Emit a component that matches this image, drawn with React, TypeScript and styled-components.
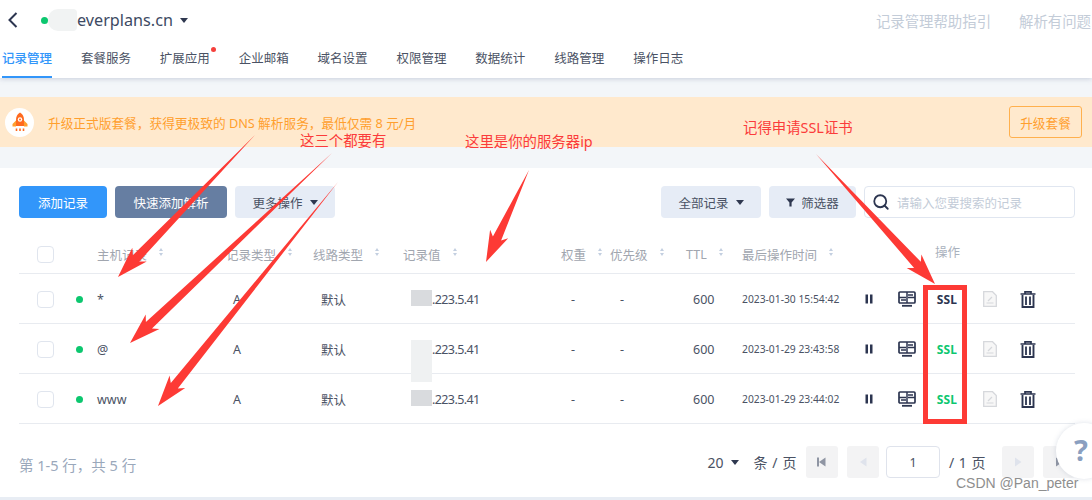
import React from "react";
import styled, { createGlobalStyle } from "styled-components";
import { Search } from "lucide-react";

const FONT = `"Noto Sans", "Noto Sans CJK SC", sans-serif`;

const GlobalStyle = createGlobalStyle`
    html, body {
        margin: 0;
        padding: 0;
        background: #f3f6f9;
    }
    * {
        box-sizing: border-box;
    }
`;

const Page = styled.div`
    position: relative;
    width: 1092px;
    height: 500px;
    overflow: hidden;
    font-family: ${FONT};
    font-size: 12.5px;
    color: #4a5264;
    background: #f3f6f9;
`;

const Header = styled.header`
    height: 78px;
    background: #fff;
    box-shadow: 0 1px 5px rgba(120, 135, 165, 0.35);
`;

const TitleRow = styled.div`
    height: 40px;
    display: flex;
    align-items: center;
    padding-left: 8px;
`;

const Domain = styled.div`
    display: flex;
    align-items: center;
    margin-left: 23px;
    font-size: 16.2px;
    color: #3d4a63;
`;

const StatusDot = styled.span<{ $left?: number }>`
    flex: none;
    width: 7px;
    height: 7px;
    border-radius: 50%;
    background: #0cc76f;
    margin-left: ${(p) => p.$left ?? 0}px;
`;

const DomainMask = styled.span`
    width: 29px;
    height: 22px;
    background: #f1f3f3;
    border-radius: 10px 4px 4px 10px;
`;

const Caret = styled.span<{ $left?: number; $color?: string }>`
    flex: none;
    display: inline-block;
    width: 0;
    height: 0;
    margin-left: ${(p) => p.$left ?? 0}px;
    border-left: 4px solid transparent;
    border-right: 4px solid transparent;
    border-top: 5px solid ${(p) => p.$color ?? "#2f3850"};
`;

const HelpLinks = styled.div`
    margin-left: auto;
    margin-right: 1px;
    display: flex;
    gap: 28px;
    font-size: 14.4px;
    color: #c3ccd8;
    white-space: nowrap;
`;

const Tabs = styled.nav`
    height: 38px;
    display: flex;
    gap: 28.9px;
    padding-left: 2px;
`;

const Tab = styled.div<{ $active?: boolean }>`
    position: relative;
    height: 38px;
    width: 50px;
    padding-top: 9px;
    line-height: 20px;
    font-size: 12.5px;
    white-space: nowrap;
    color: ${(p) => (p.$active ? "#3296fa" : "#4a5264")};
    font-weight: ${(p) => (p.$active ? 500 : 400)};
    border-bottom: 2px solid ${(p) => (p.$active ? "#3296fa" : "transparent")};
`;

const RedDot = styled.span`
    position: absolute;
    top: 7px;
    right: -6px;
    width: 5px;
    height: 5px;
    border-radius: 50%;
    background: #f5403c;
`;

const Banner = styled.div`
    height: 50px;
    margin-top: 19px;
    display: flex;
    align-items: center;
    padding: 0 10px 0 5px;
    background: #ffe9cd;
    color: #ff9f2e;
    font-size: 12.7px;
`;

const RocketBadge = styled.div`
    width: 29px;
    height: 29px;
    border-radius: 50%;
    background: #fff;
    display: flex;
    align-items: center;
    justify-content: center;
    margin-right: 14px;
`;

const UpgradeButton = styled.div`
    margin-left: auto;
    width: 73px;
    height: 32px;
    display: flex;
    align-items: center;
    justify-content: center;
    border: 1px solid #ffb04d;
    border-radius: 3px;
`;

const Card = styled.main`
    height: 329px;
    margin-top: 21px;
    padding: 18px 17px 0 19px;
    background: #fff;
`;

const Toolbar = styled.div`
    display: flex;
    gap: 8px;
    height: 32px;
`;

const Button = styled.div<{ $variant?: "primary" | "slate"; $width: number }>`
    width: ${(p) => p.$width}px;
    height: 32px;
    display: flex;
    align-items: center;
    justify-content: center;
    border-radius: 4px;
    white-space: nowrap;
    background: ${(p) =>
        p.$variant === "primary" ? "#3296fa" : p.$variant === "slate" ? "#667ea2" : "#e6ecf6"};
    color: ${(p) => (p.$variant ? "#fff" : "#4a5264")};
`;

const Spacer = styled.div`
    flex: 1;
`;

const SearchBox = styled.div`
    width: 211px;
    height: 32px;
    display: flex;
    align-items: center;
    gap: 7px;
    padding-left: 7px;
    border: 1px solid #e0e6f0;
    border-radius: 4px;
    color: #c3ccd8;
`;

const columns = "48px 30px 129px 87px 90px 158px 49px 76px 56px 122px 211px";

const TableHead = styled.div`
    display: grid;
    grid-template-columns: ${columns};
    height: 56px;
    padding-top: 17px;
    align-items: center;
    border-bottom: 1px solid #e8ebf0;
    color: #a1a6af;
`;

const TableRow = styled.div`
    display: grid;
    grid-template-columns: ${columns};
    height: 50px;
    padding-top: 1px;
    align-items: center;
    border-bottom: 1px solid #e8ebf0;
`;

const Cell = styled.div<{ $pad?: number }>`
    display: flex;
    align-items: center;
    padding-left: ${(p) => p.$pad ?? 0}px;
    white-space: nowrap;
`;

const OperateCell = styled(Cell)`
    margin-bottom: 5px;
    padding-left: 71px;
    color: #a9b1bd;
`;

const TimeCell = styled(Cell)`
    font-size: 10.3px;
`;

const ValueCell = styled(Cell)`
    letter-spacing: -0.6px;
`;

const Check = styled.span`
    width: 17px;
    height: 17px;
    margin-left: 18px;
    border: 1px solid #e0e5ee;
    border-radius: 4px;
    background: #fff;
`;

const RowDot = styled(StatusDot)`
    margin-left: 9px;
`;

const SortBox = styled.span`
    display: inline-flex;
    flex-direction: column;
    gap: 2px;
    margin-left: 12px;
    margin-bottom: 5px;
`;

const SortUp = styled.i`
    display: block;
    width: 0;
    height: 0;
    border-left: 2.5px solid transparent;
    border-right: 2.5px solid transparent;
    border-bottom: 3px solid #c3cfe0;
`;

const SortDown = styled(SortUp)`
    border-bottom: 0;
    border-top: 3px solid #c3cfe0;
`;

const Mask = styled.span<{ $tone: string; $height: number }>`
    position: relative;
    width: 21px;
    height: 14px;
    &::before {
        content: "";
        position: absolute;
        top: -2px;
        left: 0;
        width: 21px;
        height: ${(p) => p.$height}px;
        background: ${(p) => p.$tone};
    }
`;

const Actions = styled.div`
    display: flex;
    align-items: center;
    padding-left: 1px;
`;

const ActionSlot = styled.span<{ $gap: number; $w: number }>`
    display: flex;
    justify-content: center;
    width: ${(p) => p.$w}px;
    margin-left: ${(p) => p.$gap}px;
`;

const SslLabel = styled.span<{ $on?: boolean }>`
    font-size: 12px;
    font-weight: 700;
    letter-spacing: 0.2px;
    color: ${(p) => (p.$on ? "#0cc76f" : "#2c3550")};
`;

const Pagination = styled.div`
    display: flex;
    align-items: center;
    height: 32px;
    margin-top: 22px;
`;

const TotalText = styled.div`
    margin-top: 5px;
    color: #9aa8bb;
    font-size: 14.5px;
`;

const PageSize = styled.div`
    margin-left: auto;
    display: flex;
    align-items: center;
    font-size: 14px;
    margin-right: 9px;
`;

const PageUnit = styled.span`
    margin-left: 15px;
    letter-spacing: 0.6px;
`;

const PageButton = styled.div<{ $left: number }>`
    width: 32px;
    height: 32px;
    margin-left: ${(p) => p.$left}px;
    display: flex;
    align-items: center;
    justify-content: center;
    border-radius: 3px;
    background: #f3f3f4;
`;

const PageInput = styled.div`
    width: 54px;
    height: 32px;
    margin-left: 7px;
    display: flex;
    align-items: center;
    justify-content: center;
    border: 1px solid #dfe3ec;
    border-radius: 4px;
`;

const PageCount = styled.span`
    margin-left: 9px;
    font-size: 14px;
    letter-spacing: 0.5px;
    white-space: nowrap;
`;

const BottomStrip = styled.div`
    height: 3px;
    background: #e8edf4;
`;

const HelpBubble = styled.div`
    position: absolute;
    left: 1056px;
    top: 423px;
    width: 56px;
    height: 56px;
    padding-left: 18px;
    border-radius: 50%;
    background: #fff;
    box-shadow: 0 0 5px rgba(120, 135, 165, 0.25);
    color: #8a9fc0;
    font-size: 29px;
    font-weight: 700;
    line-height: 54px;
`;

const Watermark = styled.div`
    position: absolute;
    left: 956px;
    top: 474px;
    font-family: "Liberation Sans", sans-serif;
    font-size: 14px;
    line-height: 18px;
    color: #8e8e8e;
    white-space: nowrap;
`;

const Overlay = styled.svg`
    position: absolute;
    left: 0;
    top: 0;
    pointer-events: none;
`;

const Note = styled.div<{ $x: number; $y: number }>`
    position: absolute;
    left: ${(p) => p.$x}px;
    top: ${(p) => p.$y}px;
    font-size: 14.4px;
    line-height: 20px;
    color: #fb3b3b;
    white-space: nowrap;
`;

const RedBox = styled.div`
    position: absolute;
    left: 923px;
    top: 285px;
    width: 44px;
    height: 139px;
    border: 5px solid #fd3a35;
`;

const arrowPoints = (x1: number, y1: number, x2: number, y2: number) => {
    const len = Math.hypot(x2 - x1, y2 - y1);
    const ux = (x2 - x1) / len;
    const uy = (y2 - y1) / len;
    const nx = -uy;
    const ny = ux;
    const at = (back: number, side: number) =>
        `${(x2 - ux * back + nx * side).toFixed(1)},${(y2 - uy * back + ny * side).toFixed(1)}`;
    return [
        `${x1},${y1}`,
        at(26, 4.5),
        at(31, 10),
        `${x2},${y2}`,
        at(31, -10),
        at(26, -4.5),
    ].join(" ");
};

const ARROWS = [
    [255, 135, 118, 277],
    [332, 153, 130, 343],
    [338, 182, 158, 406],
    [529, 170, 486, 262],
    [816, 154, 935, 284],
];

const COLUMNS = ["主机记录", "记录类型", "线路类型", "记录值", "权重", "优先级", "TTL", "最后操作时间"];

const RECORDS = [
    { host: "*", time: "2023-01-30 15:54:42", ssl: false, tone: "#d9dbde", maskH: 16 },
    { host: "@", time: "2023-01-29 23:43:58", ssl: true, tone: "#eff1f2", maskH: 42 },
    { host: "www", time: "2023-01-29 23:44:02", ssl: true, tone: "#d9dbde", maskH: 16 },
];

const ChevronBack = () => (
    <svg width="10" height="16" viewBox="0 0 10 16">
        <path d="M8.5 1 L1.5 8 L8.5 15" fill="none" stroke="#2c3550" strokeWidth="2" />
    </svg>
);

const Rocket = () => (
    <svg width="16" height="20" viewBox="0 0 16 20">
        <path d="M8 0.5 C11 2 12 5 12 8 V14 H4 V8 C4 5 5 2 8 0.5 Z" fill="#ff6a1f" />
        <circle cx="8" cy="7.5" r="2.2" fill="#fff" />
        <circle cx="8" cy="7.5" r="1" fill="#ff6a1f" />
        <path d="M4 8.5 L0.5 12 V14.5 H4 Z M12 8.5 L15.5 12 V14.5 H12 Z" fill="#ff9f2e" />
        <path d="M4.5 16.5 V19 M8 16.5 V19 M11.5 16.5 V19" stroke="#ff6a1f" strokeWidth="1.6" />
    </svg>
);

const Funnel = () => (
    <svg width="9" height="9" viewBox="0 0 9 9" style={{ marginRight: 6 }}>
        <path d="M0 0.5 H9 L5.6 4.4 V8.5 H3.4 V4.4 Z" fill="#2f3850" />
    </svg>
);

const PauseIcon = () => (
    <svg width="8" height="10" viewBox="0 0 8 10">
        <path d="M0.5 0.5 H3 V9.5 H0.5 Z M5 0.5 H7.5 V9.5 H5 Z" fill="#2c3550" />
    </svg>
);

const MonitorIcon = () => (
    <svg width="18" height="16" viewBox="0 0 18 16">
        <rect x="1" y="1" width="16" height="11" rx="1" fill="none" stroke="#2c3550" strokeWidth="1.7" />
        <path d="M1 6.5 H8 M10 6.5 H17 M9 1 V12 M10 4 H15 M3 9 H8" stroke="#2c3550" strokeWidth="1.5" />
        <path d="M4 14.8 H14" stroke="#2c3550" strokeWidth="1.8" />
    </svg>
);

const DocIcon = () => (
    <svg width="14" height="16" viewBox="0 0 14 16">
        <path d="M0.7 0.7 H9.5 L13.3 4.5 V15.3 H0.7 Z" fill="#f7f7f7" stroke="#d6d8dc" strokeWidth="1.3" />
        <path d="M3.5 12 H10.5 M5 10 L9 6" stroke="#d6d8dc" strokeWidth="1.2" />
    </svg>
);

const TrashIcon = () => (
    <svg width="16" height="17" viewBox="0 0 16 17">
        <path d="M0.5 3 H15.5 M5 3 V0.9 H11 V3" fill="none" stroke="#2c3550" strokeWidth="1.7" />
        <path d="M2.5 4 V16 H13.5 V4" fill="none" stroke="#2c3550" strokeWidth="1.9" />
        <path d="M6 5.5 V14 M10 5.5 V14" stroke="#2c3550" strokeWidth="1.8" />
    </svg>
);

const PageArrow = ({ dir, bar, color }: { dir: "left" | "right"; bar?: boolean; color: string }) => (
    <svg width="12" height="12" viewBox="0 0 12 12">
        {dir === "left" ? <path d="M9.5 1.5 V10.5 L3 6 Z" fill={color} /> : <path d="M3 1.5 V10.5 L9.5 6 Z" fill={color} />}
        {bar && <rect x={dir === "left" ? 1 : 9} y="1.5" width="2" height="9" fill={color} />}
    </svg>
);

export default function App() {
    return (
        <Page>
            <GlobalStyle />
            <Header>
                <TitleRow>
                    <ChevronBack />
                    <Domain>
                        <StatusDot />
                        <DomainMask />
                        everplans.cn
                        <Caret $left={7} />
                    </Domain>
                    <HelpLinks>
                        <span>记录管理帮助指引</span>
                        <span>解析有问题</span>
                    </HelpLinks>
                </TitleRow>
                <Tabs>
                    <Tab $active>记录管理</Tab>
                    <Tab>套餐服务</Tab>
                    <Tab>
                        扩展应用
                        <RedDot />
                    </Tab>
                    <Tab>企业邮箱</Tab>
                    <Tab>域名设置</Tab>
                    <Tab>权限管理</Tab>
                    <Tab>数据统计</Tab>
                    <Tab>线路管理</Tab>
                    <Tab>操作日志</Tab>
                </Tabs>
            </Header>

            <Banner>
                <RocketBadge>
                    <Rocket />
                </RocketBadge>
                升级正式版套餐，获得更极致的 DNS 解析服务，最低仅需 8 元/月
                <UpgradeButton>升级套餐</UpgradeButton>
            </Banner>

            <Card>
                <Toolbar>
                    <Button $variant="primary" $width={88}>添加记录</Button>
                    <Button $variant="slate" $width={112}>快速添加解析</Button>
                    <Button $width={100}>
                        更多操作
                        <Caret $left={7} />
                    </Button>
                    <Spacer />
                    <Button $width={100}>
                        全部记录
                        <Caret $left={7} />
                    </Button>
                    <Button $width={87}>
                        <Funnel />
                        筛选器
                    </Button>
                    <SearchBox>
                        <Search size={18} color="#2c3550" strokeWidth={2.4} />
                        请输入您要搜索的记录
                    </SearchBox>
                </Toolbar>

                <TableHead>
                    <Cell>
                        <Check />
                    </Cell>
                    <Cell />
                    {COLUMNS.map((label) => (
                        <Cell key={label}>
                            {label}
                            <SortBox>
                                <SortUp />
                                <SortDown />
                            </SortBox>
                        </Cell>
                    ))}
                    <OperateCell>操作</OperateCell>
                </TableHead>

                {RECORDS.map((r) => (
                    <TableRow key={r.host}>
                        <Cell>
                            <Check />
                        </Cell>
                        <Cell>
                            <RowDot />
                        </Cell>
                        <Cell>{r.host}</Cell>
                        <Cell $pad={7}>A</Cell>
                        <Cell $pad={8}>默认</Cell>
                        <ValueCell $pad={8}>
                            <Mask $tone={r.tone} $height={r.maskH} />
                            .223.5.41
                        </ValueCell>
                        <Cell $pad={10}>-</Cell>
                        <Cell $pad={10}>-</Cell>
                        <Cell $pad={7}>600</Cell>
                        <TimeCell>{r.time}</TimeCell>
                        <Actions>
                            <ActionSlot $gap={0} $w={8}>
                                <PauseIcon />
                            </ActionSlot>
                            <ActionSlot $gap={25} $w={18}>
                                <MonitorIcon />
                            </ActionSlot>
                            <ActionSlot $gap={21} $w={20}>
                                <SslLabel $on={r.ssl}>SSL</SslLabel>
                            </ActionSlot>
                            <ActionSlot $gap={26} $w={14}>
                                <DocIcon />
                            </ActionSlot>
                            <ActionSlot $gap={23} $w={16}>
                                <TrashIcon />
                            </ActionSlot>
                        </Actions>
                    </TableRow>
                ))}

                <Pagination>
                    <TotalText>第 1-5 行，共 5 行</TotalText>
                    <PageSize>
                        20
                        <Caret $left={7} />
                        <PageUnit>条 / 页</PageUnit>
                    </PageSize>
                    <PageButton $left={0}>
                        <PageArrow dir="left" bar color="#8f95a3" />
                    </PageButton>
                    <PageButton $left={9}>
                        <PageArrow dir="left" color="#dfe3ec" />
                    </PageButton>
                    <PageInput>1</PageInput>
                    <PageCount>/ 1 页</PageCount>
                    <PageButton $left={16}>
                        <PageArrow dir="right" color="#dfe3ec" />
                    </PageButton>
                    <PageButton $left={9}>
                        <PageArrow dir="right" bar color="#8f95a3" />
                    </PageButton>
                </Pagination>
            </Card>
            <BottomStrip />

            <HelpBubble>?</HelpBubble>
            <Watermark>CSDN @Pan_peter</Watermark>

            <Overlay width="1092" height="500" viewBox="0 0 1092 500">
                {ARROWS.map(([x1, y1, x2, y2]) => (
                    <polygon key={`${x2}-${y2}`} points={arrowPoints(x1, y1, x2, y2)} fill="#fd3a35" />
                ))}
            </Overlay>
            <RedBox />
            <Note $x={300} $y={131}>这三个都要有</Note>
            <Note $x={465} $y={132}>这里是你的服务器ip</Note>
            <Note $x={743} $y={118}>记得申请SSL证书</Note>
        </Page>
    );
}
